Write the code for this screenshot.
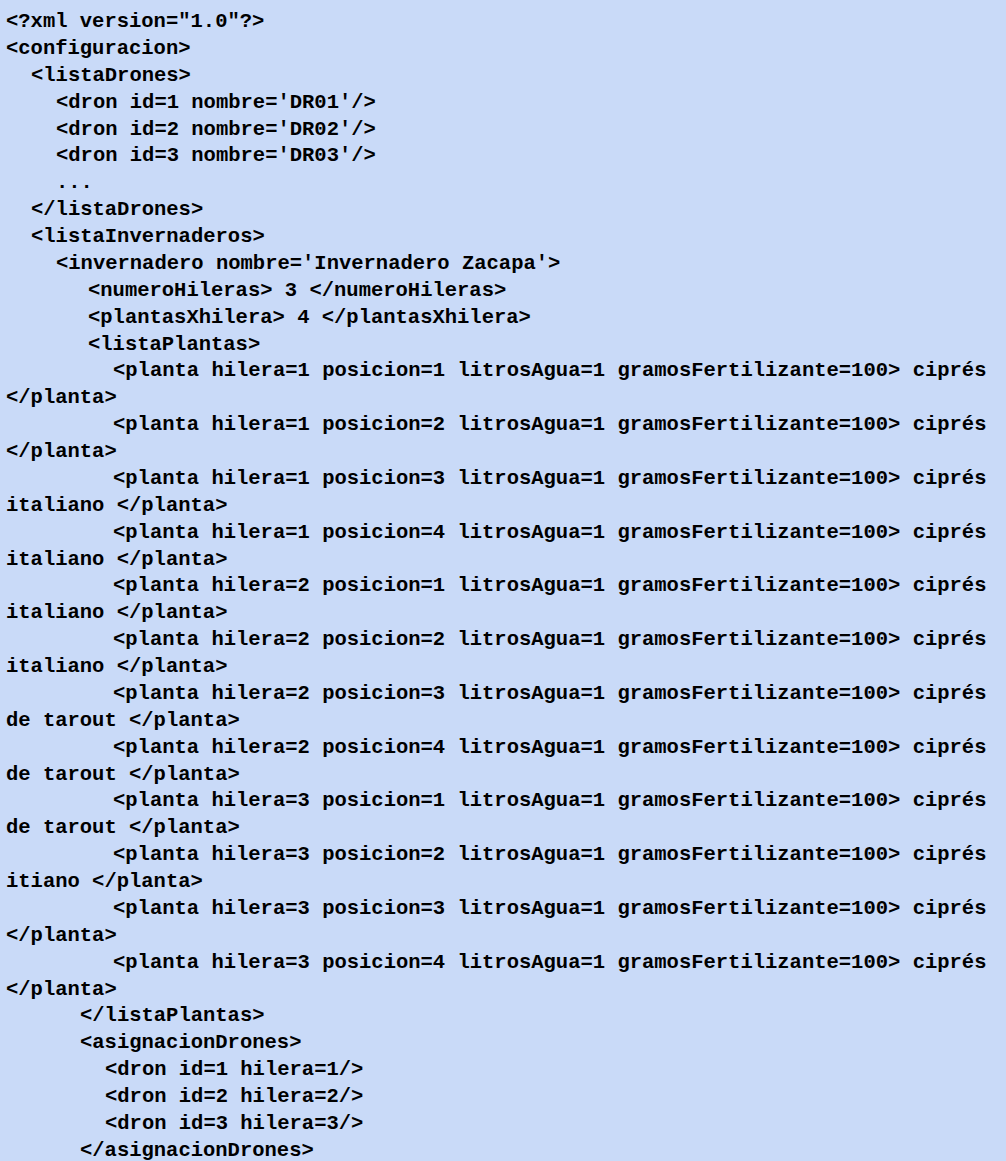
type Line = { text: string; indent: string };

const plantas: [string, string, string][] = [
  ["1", "1", "ciprés"],
  ["1", "2", "ciprés"],
  ["1", "3", "ciprés"],
  ["1", "4", "ciprés"],
  ["2", "1", "ciprés"],
  ["2", "2", "ciprés"],
  ["2", "3", "ciprés"],
  ["2", "4", "ciprés"],
  ["3", "1", "ciprés"],
  ["3", "2", "ciprés"],
  ["3", "3", "ciprés"],
  ["3", "4", "ciprés"],
];

const tails = [
  "</planta>",
  "</planta>",
  "italiano </planta>",
  "italiano </planta>",
  "italiano </planta>",
  "italiano </planta>",
  "de tarout </planta>",
  "de tarout </planta>",
  "de tarout </planta>",
  "itiano </planta>",
  "</planta>",
  "</planta>",
];

const lines: Line[] = [
  { text: '<?xml version="1.0"?>', indent: "pl-0" },
  { text: "<configuracion>", indent: "pl-0" },
  { text: "<listaDrones>", indent: "pl-[25px]" },
  { text: "<dron id=1 nombre='DR01'/>", indent: "pl-[50px]" },
  { text: "<dron id=2 nombre='DR02'/>", indent: "pl-[50px]" },
  { text: "<dron id=3 nombre='DR03'/>", indent: "pl-[50px]" },
  { text: "...", indent: "pl-[50px]" },
  { text: "</listaDrones>", indent: "pl-[25px]" },
  { text: "<listaInvernaderos>", indent: "pl-[25px]" },
  { text: "<invernadero nombre='Invernadero Zacapa'>", indent: "pl-[50px]" },
  { text: "<numeroHileras> 3 </numeroHileras>", indent: "pl-[82px]" },
  { text: "<plantasXhilera> 4 </plantasXhilera>", indent: "pl-[82px]" },
  { text: "<listaPlantas>", indent: "pl-[82px]" },
  ...plantas.flatMap(([h, p, name], i) => [
    {
      text: `<planta hilera=${h} posicion=${p} litrosAgua=1 gramosFertilizante=100> ${name}`,
      indent: "pl-[107px]",
    },
    { text: tails[i], indent: "pl-0" },
  ]),
  { text: "</listaPlantas>", indent: "pl-[74px]" },
  { text: "<asignacionDrones>", indent: "pl-[74px]" },
  { text: "<dron id=1 hilera=1/>", indent: "pl-[99px]" },
  { text: "<dron id=2 hilera=2/>", indent: "pl-[99px]" },
  { text: "<dron id=3 hilera=3/>", indent: "pl-[99px]" },
  { text: "</asignacionDrones>", indent: "pl-[74px]" },
];

export default function App() {
  return (
    <div className="min-h-[1161px] w-[1006px] overflow-hidden bg-[#c9daf8] pl-[6px] pt-[9px]">
      <pre className="font-['Courier_New','Liberation_Mono',monospace] text-[20.5px] leading-[26.88px] font-bold text-black">
        {lines.map((l, i) => (
          <div key={i} className={`${l.indent} whitespace-pre`}>
            {l.text}
          </div>
        ))}
      </pre>
    </div>
  );
}
